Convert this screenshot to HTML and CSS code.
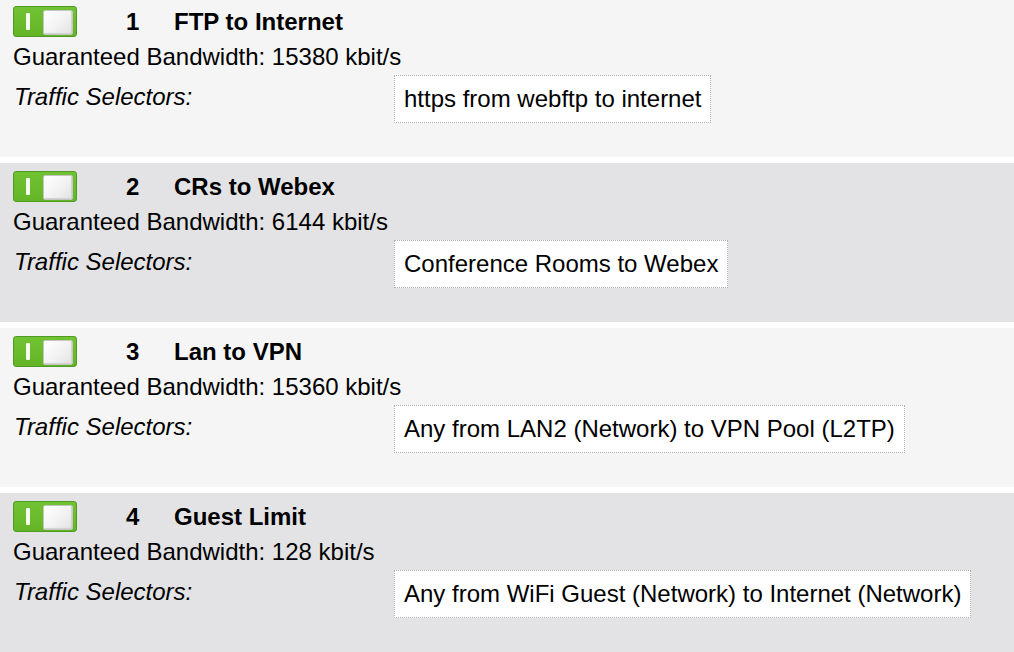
FILE: index.html
```html
<!DOCTYPE html>
<html>
<head>
<meta charset="utf-8">
<link rel="stylesheet" href="styles.css">
</head>
<body>
<div class="list">
  <div class="rule odd">
    <div class="head">
      <span class="toggle"><span class="bar"></span><span class="knob"></span></span>
      <span class="num">1</span>
      <span class="title">FTP to Internet</span>
    </div>
    <div class="bw">Guaranteed Bandwidth: 15380 kbit/s</div>
    <div class="sel">
      <span class="label">Traffic Selectors:</span>
      <span class="box">https from webftp to internet</span>
    </div>
  </div>
  <div class="rule even">
    <div class="head">
      <span class="toggle"><span class="bar"></span><span class="knob"></span></span>
      <span class="num">2</span>
      <span class="title">CRs to Webex</span>
    </div>
    <div class="bw">Guaranteed Bandwidth: 6144 kbit/s</div>
    <div class="sel">
      <span class="label">Traffic Selectors:</span>
      <span class="box">Conference Rooms to Webex</span>
    </div>
  </div>
  <div class="rule odd">
    <div class="head">
      <span class="toggle"><span class="bar"></span><span class="knob"></span></span>
      <span class="num">3</span>
      <span class="title">Lan to VPN</span>
    </div>
    <div class="bw">Guaranteed Bandwidth: 15360 kbit/s</div>
    <div class="sel">
      <span class="label">Traffic Selectors:</span>
      <span class="box">Any from LAN2 (Network) to VPN Pool (L2TP)</span>
    </div>
  </div>
  <div class="rule even">
    <div class="head">
      <span class="toggle"><span class="bar"></span><span class="knob"></span></span>
      <span class="num">4</span>
      <span class="title">Guest Limit</span>
    </div>
    <div class="bw">Guaranteed Bandwidth: 128 kbit/s</div>
    <div class="sel">
      <span class="label">Traffic Selectors:</span>
      <span class="box">Any from WiFi Guest (Network) to Internet (Network)</span>
    </div>
  </div>
</div>
</body>
</html>
```
FILE: styles.css
```css
html, body {
  margin: 0;
  padding: 0;
  background: #ffffff;
  overflow: hidden;
}
body {
  font-family: "Liberation Sans", Arial, Helvetica, sans-serif;
  font-size: 24px;
  line-height: 28px;
  color: #000;
}
.list {
  display: flex;
  flex-direction: column;
  gap: 6px;
  margin-top: -2px;
}
.rule {
  height: 159px;
  box-sizing: border-box;
  padding: 8px 0 0 13px;
}
.odd { background: #f5f5f5; }
.even { background: #e3e3e5; }
.head {
  display: flex;
  align-items: center;
  height: 31px;
}
.toggle {
  position: relative;
  width: 64px;
  height: 31px;
  box-sizing: border-box;
  border: 1px solid #4f9a22;
  border-radius: 3px;
  background: linear-gradient(#72c333, #63b527);
  flex: none;
}
.bar {
  position: absolute;
  left: 12px;
  top: 6px;
  width: 4px;
  height: 17px;
  background: #f4fbef;
  border-radius: 1px;
}
.knob {
  position: absolute;
  left: 29px;
  top: 3px;
  width: 30px;
  height: 25px;
  box-sizing: border-box;
  border: 1px solid #c5c5c5;
  border-radius: 2px;
  background: linear-gradient(135deg, #ffffff 0%, #f2f2f2 55%, #e2e2e2 100%);
  box-shadow: inset -1px -1px 1px #d0d0d0;
}
.num {
  font-weight: bold;
  margin-left: 49px;
  width: 48px;
  flex: none;
}
.title {
  font-weight: bold;
}
.bw {
  margin-top: 6px;
}
.sel {
  display: flex;
  align-items: flex-start;
  margin-top: 4px;
}
.label {
  font-style: italic;
  width: 381px;
  flex: none;
  margin-top: 8px;
  padding-left: 1px;
  box-sizing: border-box;
}
.box {
  background: #ffffff;
  border: 1px dotted #b0b0b0;
  padding: 9px 9px 9px 9px;
  white-space: nowrap;
}
```
